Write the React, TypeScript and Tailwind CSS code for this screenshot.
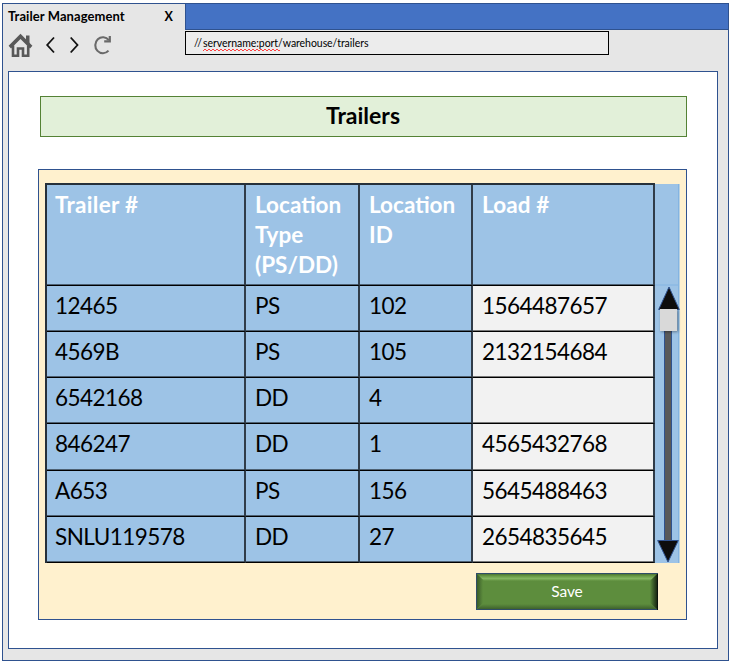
const headers = [
  { label: 'Trailer #', pad: 'pl-[8px]', tracking: 'tracking-[0.3px]' },
  { label: 'Location\nType\n(PS/DD)', pad: 'pl-[9px]', tracking: '' },
  { label: 'Location\nID', pad: 'pl-[9px]', tracking: '' },
  { label: 'Load #', pad: 'pl-[9px]', tracking: 'tracking-[0.1px]' },
];

const rows = [
  { height: 'h-[46px]', cells: ['12465', 'PS', '102', '1564487657'] },
  { height: 'h-[46px]', cells: ['4569B', 'PS', '105', '2132154684'] },
  { height: 'h-[46px]', cells: ['6542168', 'DD', '4', ''] },
  { height: 'h-[47px]', cells: ['846247', 'DD', '1', '4565432768'] },
  { height: 'h-[46px]', cells: ['A653', 'PS', '156', '5645488463'] },
  { height: 'h-[46px]', cells: ['SNLU119578', 'DD', '27', '2654835645'] },
];

const columns = 'grid grid-cols-[199px_114px_113px_182px]';
const cellLines =
  'border-b border-r-2 border-b-black border-r-[#303c49] shadow-[inset_0_-1px_0_rgba(0,0,0,0.5)]';

function NavIcons() {
  return (
    <svg className="ml-[5px] mt-[3px] block" width="110" height="28" viewBox="8 31 110 28" fill="none">
      <path d="M8.6 45.8 20.5 33.8 32.4 45.8 30 48.4 20.5 39 11 48.4Z" fill="#595959" />
      <path d="M26 35.5h3.5v8L26 40Z" fill="#595959" />
      <path d="M13 45.5V55.700h5V48.500h5V55.700h5.200V45.500" stroke="#595959" strokeWidth="2.600" />
      <path d="M54 37.5 47.2 45 54 52.5" stroke="#111" strokeWidth="1.8" />
      <path d="M70.7 37.5 77.5 45 70.7 52.5" stroke="#111" strokeWidth="1.8" />
      <path d="M108.5 50.6A7.6 8 0 1 1 108.8 40.2" stroke="#6a6a6a" strokeWidth="2.1" />
      <path d="M109.800 36v5.300h-5.600" stroke="#6a6a6a" strokeWidth="2.200" />
    </svg>
  );
}

function ScrollBar() {
  return (
    <svg className="block" width="32" height="379" viewBox="655 184 32 379">
      <defs>
        <filter id="thumbShadow" x="-40%" y="-40%" width="180%" height="180%">
          <feDropShadow dx="1" dy="1" stdDeviation="1.5" floodColor="#000" floodOpacity="0.4" />
        </filter>
      </defs>
      <rect x="655" y="184" width="25" height="379" fill="#9dc3e6" />
      <path d="M678.5 184V563M655 285H679" stroke="#83b4e2" strokeWidth="1" />
      <path d="M679.5 184V563" stroke="#bdd2df" strokeWidth="1" />
      <rect x="664.5" y="328.5" width="7" height="213" fill="#595959" stroke="#2f528f" />
      <path d="M669 287 679.3 309.5H658.7Z" fill="#0d0d0d" stroke="#2f528f" />
      <path d="M668 562 657.7 540.5H678.3Z" fill="#0d0d0d" stroke="#2f528f" />
      <rect x="660" y="309" width="17" height="22" fill="#d9d9d9" filter="url(#thumbShadow)" />
    </svg>
  );
}

function SaveButton() {
  return (
    <button className="relative ml-[437px] mt-[10px] block h-[37px] w-[182px] font-[Lato,sans-serif] text-[15.5px] text-white">
      <svg className="absolute inset-0" width="182" height="37" viewBox="0 0 182 37">
        <defs>
          <linearGradient id="topBevel" x2="0" y2="1">
            <stop offset="0" stopColor="#3e612a" />
            <stop offset=".35" stopColor="#659642" />
            <stop offset=".7" stopColor="#85b762" />
            <stop offset="1" stopColor="#5d8d3d" />
          </linearGradient>
          <linearGradient id="bottomBevel" x2="0" y2="1">
            <stop stopColor="#5d8d3d" />
            <stop offset="1" stopColor="#38592a" />
          </linearGradient>
          <linearGradient id="leftBevel">
            <stop stopColor="#345426" />
            <stop offset="1" stopColor="#5d8d3d" />
          </linearGradient>
          <linearGradient id="rightBevel">
            <stop stopColor="#5d8d3d" />
            <stop offset=".35" stopColor="#3f632c" />
            <stop offset="1" stopColor="#101a0d" />
          </linearGradient>
        </defs>
        <rect width="182" height="37" fill="#5d8d3d" />
        <path d="M0 0H182L174 8H8Z" fill="url(#topBevel)" />
        <path d="M0 37H182L175 31H7Z" fill="url(#bottomBevel)" />
        <path d="M0 0 7 7V30L0 37Z" fill="url(#leftBevel)" />
        <path d="M182 0 174 8V30L182 37Z" fill="url(#rightBevel)" />
        <path d="M0 .5H182M.5 0V37M0 36.5H182" stroke="#2f4d68" />
        <path d="M181.5 1V37" stroke="#0b130c" />
      </svg>
      <span className="relative tracking-[-0.1px]">Save</span>
    </button>
  );
}

export default function App() {
  return (
    <div className="h-[666px] w-[732px] overflow-hidden bg-white pl-[2px] pt-[3px] font-[Lato,sans-serif] text-black">
      <div className="h-[658px] w-[727px] border border-[#2f528f] bg-[#e6e6e6]">
        <header className="flex h-[67px]">
          <div className="w-[182px]">
            <div className="flex h-[24px] items-center justify-between pl-[5px] pr-[12px] pt-[2px] text-[13px] font-bold">
              <span className="tracking-[0.08px]">Trailer Management</span>
              <span className="text-[12.5px]">X</span>
            </div>
            <NavIcons />
          </div>
          <div className="w-[543px]">
            <div className="h-[26px] border-b border-l border-[#2f528f] bg-[#4472c4]" />
            <div className="mt-px flex h-[24px] w-[424px] items-center border border-black bg-[#ececec] pl-[8px] pt-px text-[10.5px]">
              <span className="relative whitespace-nowrap tracking-[-0.05px]">
                <span className="tracking-[0.9px]">//</span>servername:port/warehouse/trailers
                <svg className="absolute left-[9px] top-[12px]" width="77" height="4" viewBox="0 0 77 4">
                  <defs>
                    <pattern id="squiggle" width="4" height="4" patternUnits="userSpaceOnUse">
                      <path d="M0 3 2 1 4 3" fill="none" stroke="#ff4040" strokeWidth="1" />
                    </pattern>
                  </defs>
                  <rect width="77" height="4" fill="url(#squiggle)" />
                </svg>
              </span>
            </div>
          </div>
        </header>

        <main className="ml-[5px] h-[578px] w-[710px] border border-[#2f528f] bg-white pt-[24px]">
          <h1 className="ml-[31px] flex h-[41px] w-[647px] items-center justify-center border border-[#548235] bg-[#e2f0d9] pb-[3px] pr-px text-[23px] font-bold">
            Trailers
          </h1>
          <section className="ml-[29px] mt-[32px] h-[451px] w-[649px] border border-[#2f528f] bg-[#fff1ce] pt-[13px]">
            <div className="flex pl-[6px]">
              <div className="border-l-2 border-t-2 border-[#26303a] bg-[#9dc3e6] text-[22.5px]">
                <div className={columns}>
                  {headers.map(({ label, pad, tracking }) => (
                    <div key={label} className={`h-[101px] whitespace-pre pt-[5px] font-bold leading-[30px] text-white ${cellLines} ${pad} ${tracking}`}>
                      {label}
                    </div>
                  ))}
                </div>
                {rows.map((row) => (
                  <div key={row.cells[0]} className={columns}>
                    {row.cells.map((value, i) => (
                      <div key={i} className={`${row.height} pt-[5px] leading-[30px] tracking-[-0.55px] ${cellLines} ${i === 0 ? 'pl-[8px]' : 'pl-[9px]'} ${i === 3 ? 'bg-[#f2f2f2]' : ''}`}>
                        {value}
                      </div>
                    ))}
                  </div>
                ))}
              </div>
              <div className="mt-px w-[31px]">
                <ScrollBar />
              </div>
            </div>
            <SaveButton />
          </section>
        </main>
      </div>
    </div>
  );
}
